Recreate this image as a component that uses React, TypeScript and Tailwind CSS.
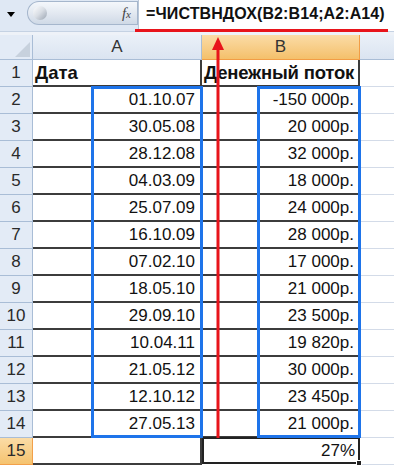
import React from "react"

const rows: [string, string][] = [
  ["01.10.07", "-150 000р."],
  ["30.05.08", "20 000р."],
  ["28.12.08", "32 000р."],
  ["04.03.09", "18 000р."],
  ["25.07.09", "24 000р."],
  ["16.10.09", "28 000р."],
  ["07.02.10", "17 000р."],
  ["18.05.10", "21 000р."],
  ["29.09.10", "23 500р."],
  ["10.04.11", "19 820р."],
  ["21.05.12", "30 000р."],
  ["12.10.12", "23 450р."],
  ["27.05.13", "21 000р."],
]

const font = { fontFamily: '"Liberation Sans", Arial, sans-serif' }

const RowHead = ({ n, active }: { n: number; active?: boolean }) => (
  <div
    className={
      active
        ? "w-[33px] h-[27px] flex items-center justify-center text-[17px] text-[#2a2a2a] bg-gradient-to-b from-[#fbdca6] to-[#f5c36f] border-r border-b border-[#f2a04a]"
        : "w-[33px] h-[27px] flex items-center justify-center text-[17px] text-[#2a2a2a] bg-[#e3ebf6] border-r border-b border-[#a9bdd6]"
    }
  >
    {n}
  </div>
)

const Extra = () => <div className="flex-1 h-[27px] border-b border-[#d3dbe8]" />

export default function App() {
  return (
    <div className="w-[394px] h-[469px] bg-white overflow-hidden relative select-none" style={font}>
      {/* formula bar */}
      <div className="h-[35px] flex flex-col bg-[#dfe8f4]">
        <div className="h-[31px] flex items-stretch">
          <div className="w-[27px] flex items-center justify-start pl-[7px]">
            <div className="w-0 h-0 border-l-[4px] border-r-[4px] border-t-[5px] border-l-transparent border-r-transparent border-t-black -mt-[3px]" />
          </div>
          <div className="w-[111px] h-[24px] mt-[1px] rounded-l-full rounded-r-[3px] border border-[#a5b6cc] bg-gradient-to-b from-[#f4f7fb] via-[#e3e9f1] to-[#cfd9e6] flex items-center justify-between pl-[5px] pr-[6px]">
            <div className="w-[14px] h-[14px] rounded-full bg-gradient-to-br from-white via-[#d8dde4] to-[#9aa4b1]" />
            <span className="text-[15px] italic text-[#444]" style={{ fontFamily: '"Liberation Serif", serif' }}>
              f<span className="text-[11px]">x</span>
            </span>
          </div>
          <div className="flex-1 bg-white border-l border-[#b8c6d8] flex items-start pl-[7px] pt-[2px]">
            <span className="text-[16px] font-semibold text-[#111] tracking-[0.1px]">=ЧИСТВНДОХ(B2:B14;A2:A14)</span>
          </div>
        </div>
        <div className="h-[4px] bg-[#eef2f8] border-t border-[#c5d2e3]" />
      </div>

      {/* column headers */}
      <div className="flex h-[25px]">
        <div className="w-[33px] bg-[#e3ebf6] border-r border-b border-[#a9bdd6] relative">
          <svg className="absolute right-[2px] bottom-[2px]" width="15" height="15">
            <polygon points="15,0 15,15 0,15" fill="#c7d1dd" />
          </svg>
        </div>
        <div className="w-[169px] bg-gradient-to-b from-[#eaf0f8] to-[#dbe4f1] border-r border-b border-[#a9bdd6] flex items-center justify-center text-[17px] text-[#333]">
          A
        </div>
        <div className="w-[158px] bg-gradient-to-b from-[#fbdca6] to-[#f4c06a] border-r border-b border-[#f29d45] flex items-center justify-center text-[17px] text-[#333]">
          B
        </div>
        <div className="flex-1 bg-gradient-to-b from-[#eaf0f8] to-[#dbe4f1] border-b border-[#a9bdd6]" />
      </div>

      {/* row 1 */}
      <div className="flex">
        <RowHead n={1} />
        <div className="w-[169px] h-[27px] border-r-2 border-b-2 border-[#3c3c3c] flex items-center pl-[2px] text-[18.5px] font-bold text-[#111]">
          Дата
        </div>
        <div className="w-[158px] h-[27px] border-r-2 border-b-2 border-[#3c3c3c] flex items-center pl-[2px] text-[18.5px] font-bold text-[#111] whitespace-nowrap tracking-[-0.2px]">
          Денежный поток
        </div>
        <Extra />
      </div>

      {rows.map(([d, v], i) => (
        <div className="flex" key={d}>
          <RowHead n={i + 2} />
          <div className="w-[169px] h-[27px] border-r-2 border-b-2 border-[#3c3c3c] flex items-center justify-end pr-[5px] text-[17px] text-[#111]">
            {d}
          </div>
          <div className="w-[158px] h-[27px] border-r-2 border-b-2 border-[#3c3c3c] flex items-center justify-end pr-[4px] text-[17px] text-[#111] whitespace-nowrap">
            {v}
          </div>
          <Extra />
        </div>
      ))}

      {/* row 15 */}
      <div className="flex">
        <RowHead n={15} active />
        <div className="w-[169px] h-[27px] border-r-2 border-b-2 border-[#3c3c3c]" />
        <div className="w-[158px] h-[27px] border-2 border-[#222] -mt-[1px] flex items-center justify-end pr-[3px] text-[17px] text-[#111] relative">
          27%
          <div className="absolute -right-[4px] -bottom-[4px] w-[6px] h-[6px] bg-[#222] border border-white" />
        </div>
        <Extra />
      </div>

      {/* overlays: highlighted ranges */}
      <div className="absolute left-[91px] top-[86px] w-[112px] h-[352px] border-[3px] border-[#1e74ea]" />
      <div className="absolute left-[257px] top-[86px] w-[104px] h-[352px] border-[3px] border-[#1e74ea]" />

      {/* red underline and arrow */}
      <div className="absolute left-[135px] top-[29px] w-[253px] h-[3px] bg-[#e8141b]" />
      <svg className="absolute left-[208px] top-[36px]" width="20" height="404">
        <line x1="10" y1="10" x2="10" y2="402" stroke="#e8141b" strokeWidth="3" />
        <polygon points="10,1 4,14 16,14" fill="#e8141b" />
      </svg>
    </div>
  )
}
